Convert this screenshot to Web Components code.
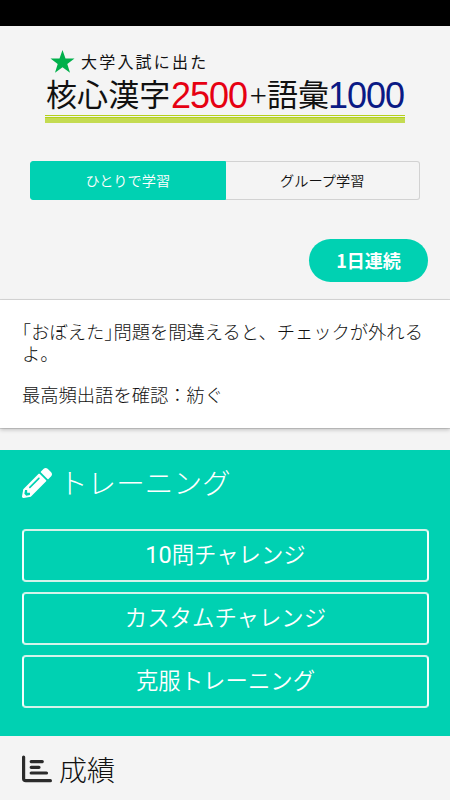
<!DOCTYPE html>
<html lang="ja">
<head>
<meta charset="utf-8">
<title>核心漢字2500+語彙1000</title>
<style>
html,body{margin:0;height:800px;overflow:hidden;background:#f4f4f4}
body{font-family:"Noto Sans CJK JP",sans-serif;font-weight:300;color:#111}
</style>
</head>
<body>
<study-app></study-app>
<script>
function define(name, html) {
  customElements.define(name, class extends HTMLElement {
    constructor() {
      super();
      const t = document.createElement('template');
      t.innerHTML = html;
      this.attachShadow({mode: 'open'}).append(t.content.cloneNode(true));
    }
  });
}

define('status-bar', `<style>:host{display:block;height:26px;background:#000;flex:none}</style>`);

define('app-logo', `<style>
:host{display:block;width:360px;margin:22px 0 0 45px;height:77px;color:#111;white-space:nowrap}
.top{display:flex;align-items:center;height:27px;padding-left:5px;gap:6px;font-size:16px;line-height:27px;letter-spacing:2.2px;font-weight:400}
svg{display:block;width:25px;height:25px}
.main{display:flex;height:40px;line-height:40px;padding-left:1px;font-size:31px;font-weight:400}
.main span{flex:none}
.k{width:125px;letter-spacing:.1px;line-height:36px}
.n{font-family:"Liberation Sans",sans-serif;font-size:36px;letter-spacing:-1px;line-height:42px}
.r{color:#e60012;width:79px}.b{color:#0b1a85}
.p{width:17px;font-family:"Noto Sans CJK JP",sans-serif;font-weight:300;font-size:31px;line-height:38px}
.g{width:61px;letter-spacing:.1px;line-height:36px}
.rule{height:5px;background:#c4db51;border-top:1px solid #b4d11a}
.line{height:1px;background:#b4d11a;margin-bottom:1px}
</style>
<div class="top"><svg viewBox="0 0 25 25"><path fill="#00b04b" d="M12.500 1l3 8.500h9l-7.200 5.400 2.700 8.800-7.500-5.400L5 23.700l2.700-8.800L.5 9.500h9z"/></svg><span>大学入試に出た</span></div>
<div class="main"><span class="k">核心漢字</span><span class="n r">2500</span><span class="p">+</span><span class="g">語彙</span><span class="n b">1000</span></div>
<div class="line"></div><div class="rule"></div>`);

define('tab-item', `<style>
:host{flex:1;display:flex;align-items:center;justify-content:center;box-sizing:border-box;border:1px solid #d2d2d2;padding-bottom:2px;font-size:14.2px;line-height:20px;font-weight:350}
:host(:first-child){border-radius:3px 0 0 3px}
:host(:last-child){border-radius:0 3px 3px 0;border-left:0}
:host([active]){background:#00d1b2;border-color:#00d1b2;color:#fff}
</style><slot></slot>`);
define('tab-group', `<style>:host{display:flex;width:390px;height:39px;margin:36px 0 0 30px}</style><slot></slot>`);

define('streak-badge', `<style>
:host{display:flex;box-sizing:border-box;align-items:center;justify-content:center;width:119px;height:43px;padding-bottom:2px;border-radius:22px;background:#00d1b2;color:#fff;font-size:18px;font-weight:700;margin:39px 0 0 309px}
</style><slot></slot>`);

define('notice-card', `<style>
:host{display:block;box-sizing:border-box;height:128px;margin-top:18px;padding:20px 22px 0;background:#fff;box-shadow:0 2px 4px rgba(0,0,0,.2),0 0 0 1px rgba(0,0,0,.12);font-size:18.3px;line-height:22px}
::slotted(p){margin:0 0 19px;white-space:nowrap}
</style><slot></slot>`);
define('half-mark', `<style>:host{font-feature-settings:"halt"}</style><slot></slot>`);

define('section-head', `<style>
:host{display:flex;height:40px;align-items:center;font-size:28px;line-height:40px}
::slotted(svg){width:30px;height:30px;margin-right:7px;flex:none}
::slotted(.wide){font-size:28.6px;margin-top:-2px}
</style><slot></slot>`);

define('outline-button', `<style>
:host{display:flex;box-sizing:border-box;height:53px;align-items:center;justify-content:center;padding-bottom:5px;border:2px solid #d4f3ea;border-left-color:#f2fffc;border-right-color:#f2fffc;border-radius:4px;color:#fff;font-size:22.4px;line-height:30px;font-weight:350}
</style><slot></slot>`);
define('wide-digits', `<style>:host{font-family:Roboto,sans-serif;font-weight:400;font-size:23.500px;padding-top:4px}</style><slot></slot>`);

define('training-panel', `<style>
:host{display:block;box-sizing:border-box;height:286px;margin-top:22px;padding:13px 21px 0 22px;background:#00d1b2;color:#fff}
.list{display:flex;flex-direction:column;gap:10px;margin-top:26px}
</style>
<section-head><svg viewBox="0 0 512 512"><path fill="#fff" d="M497.900 142.100l-46.100 46.100c-4.700 4.700-12.300 4.700-17 0l-111-111c-4.700-4.700-4.700-12.300 0-17l46.100-46.100c18.700-18.700 49.100-18.700 67.900 0l60.100 60.100c18.800 18.700 18.800 49.100 0 67.900zM284.200 99.800L21.600 362.400.4 483.900c-2.900 16.400 11.400 30.600 27.800 27.800l121.500-21.300 262.600-262.600c4.700-4.700 4.700-12.300 0-17l-111-111c-4.800-4.700-12.400-4.700-17.100 0zM124.100 339.900c-5.500-5.500-5.500-14.300 0-19.800l154-154c5.500-5.500 14.300-5.500 19.800 0s5.500 14.300 0 19.800l-154 154c-5.500 5.500-14.300 5.500-19.800 0zM88 424h48v36.300l-64.500 11.300-31.100-31.100L51.700 376H88v48z"/></svg><span class="wide">トレーニング</span></section-head>
<div class="list"><outline-button><wide-digits>10</wide-digits>問チャレンジ</outline-button><outline-button>カスタムチャレンジ</outline-button><outline-button>克服トレーニング</outline-button></div>`);

define('results-panel', `<style>:host{display:block;padding:13px 22px 0}</style>
<section-head><svg viewBox="0 0 30 30"><path fill="none" stroke="#2b2b2b" stroke-width="3.200" stroke-linecap="round" stroke-linejoin="round" d="M1.600 3.100V24.500q0 2.200 2.200 2.200H28.400M9.200 7.600H20.300M9.200 13.300H17M9.200 19H24.500"/></svg><span>成績</span></section-head>`);

define('study-app', `<style>:host{display:flex;flex-direction:column;width:450px;height:800px;overflow:hidden}:host>*{flex:none}</style>
<status-bar></status-bar>
<app-logo></app-logo>
<tab-group><tab-item active>ひとりで学習</tab-item><tab-item>グループ学習</tab-item></tab-group>
<streak-badge>1日連続</streak-badge>
<notice-card><p><half-mark>「</half-mark>おぼえた<half-mark>」</half-mark>問題を間違えると、チェックが外れる<br>よ。</p><p>最高頻出語を確認：紡ぐ</p></notice-card>
<training-panel></training-panel>
<results-panel></results-panel>`);
</script>
</body>
</html>
